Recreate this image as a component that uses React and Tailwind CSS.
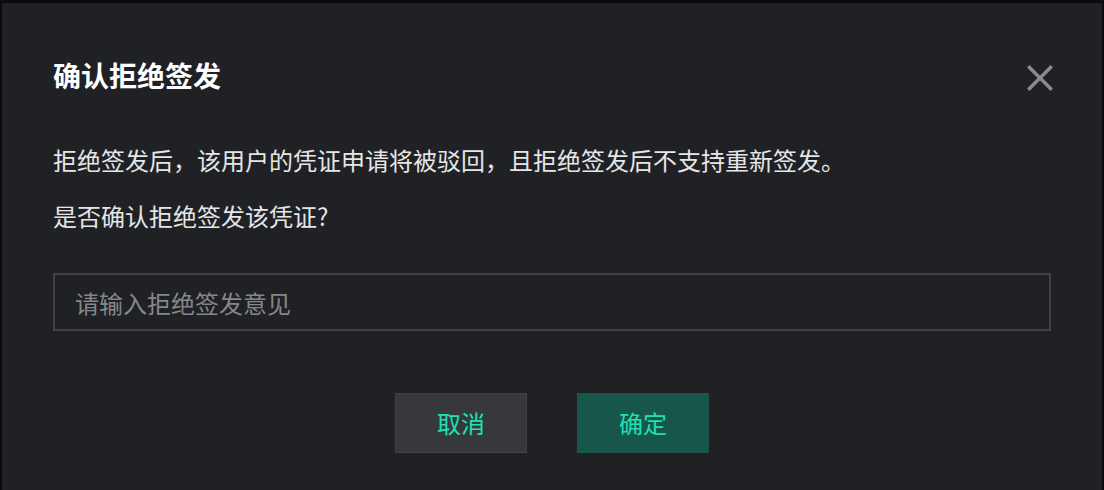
import React from 'react';

const cjk = { fontFamily: '"Noto Sans CJK SC", "Noto Sans", sans-serif' };

export default function App() {
  return (
    <div className="h-[490px] w-[1104px] overflow-hidden bg-[#0b0b0c] pl-[2px] pt-[3px]" style={cjk}>
      <div className="h-[500px] w-[1100px] bg-[#202125] px-[51px] pt-[56px]">
        {/* header */}
        <div className="flex h-[32px] items-center justify-between">
          <h2 className="text-[28px] font-bold leading-[32px] text-white">确认拒绝签发</h2>
          <button className="mr-[-5px] mt-[3px] mb-[-3px] flex h-[32px] w-[32px] items-center justify-center">
            <svg width="26" height="26" viewBox="0 0 26 26" fill="none">
              <path d="M2.5 2.5L23.5 23.5M23.5 2.5L2.5 23.5" stroke="#8a8b8d" strokeWidth="3.5" strokeLinecap="square" />
            </svg>
          </button>
        </div>

        {/* body */}
        <p className="mt-[53px] text-[24px] leading-[32px] text-[#e6e6e6]">
          拒绝签发后，该用户的凭证申请将被驳回，且拒绝签发后不支持重新签发。
        </p>
        <p className="mt-[24px] text-[24px] leading-[32px] text-[#e6e6e6]">是否确认拒绝签发该凭证?</p>

        <input
          className="mt-[41px] h-[58px] w-full border-2 border-[#3f4146] bg-transparent pl-[20px] text-[24px] text-[#e6e6e6] outline-none placeholder:text-[#86878a]"
          placeholder="请输入拒绝签发意见"
          style={cjk}
        />

        {/* footer */}
        <div className="mt-[62px] flex justify-center gap-[50px]">
          <button className="h-[60px] w-[132px] border border-[#404246] bg-[#36383c] text-[24px] text-[#1fe0b2]">
            取消
          </button>
          <button className="h-[60px] w-[132px] bg-[#17574b] text-[24px] text-[#1fe0b2]">确定</button>
        </div>
      </div>
    </div>
  );
}
